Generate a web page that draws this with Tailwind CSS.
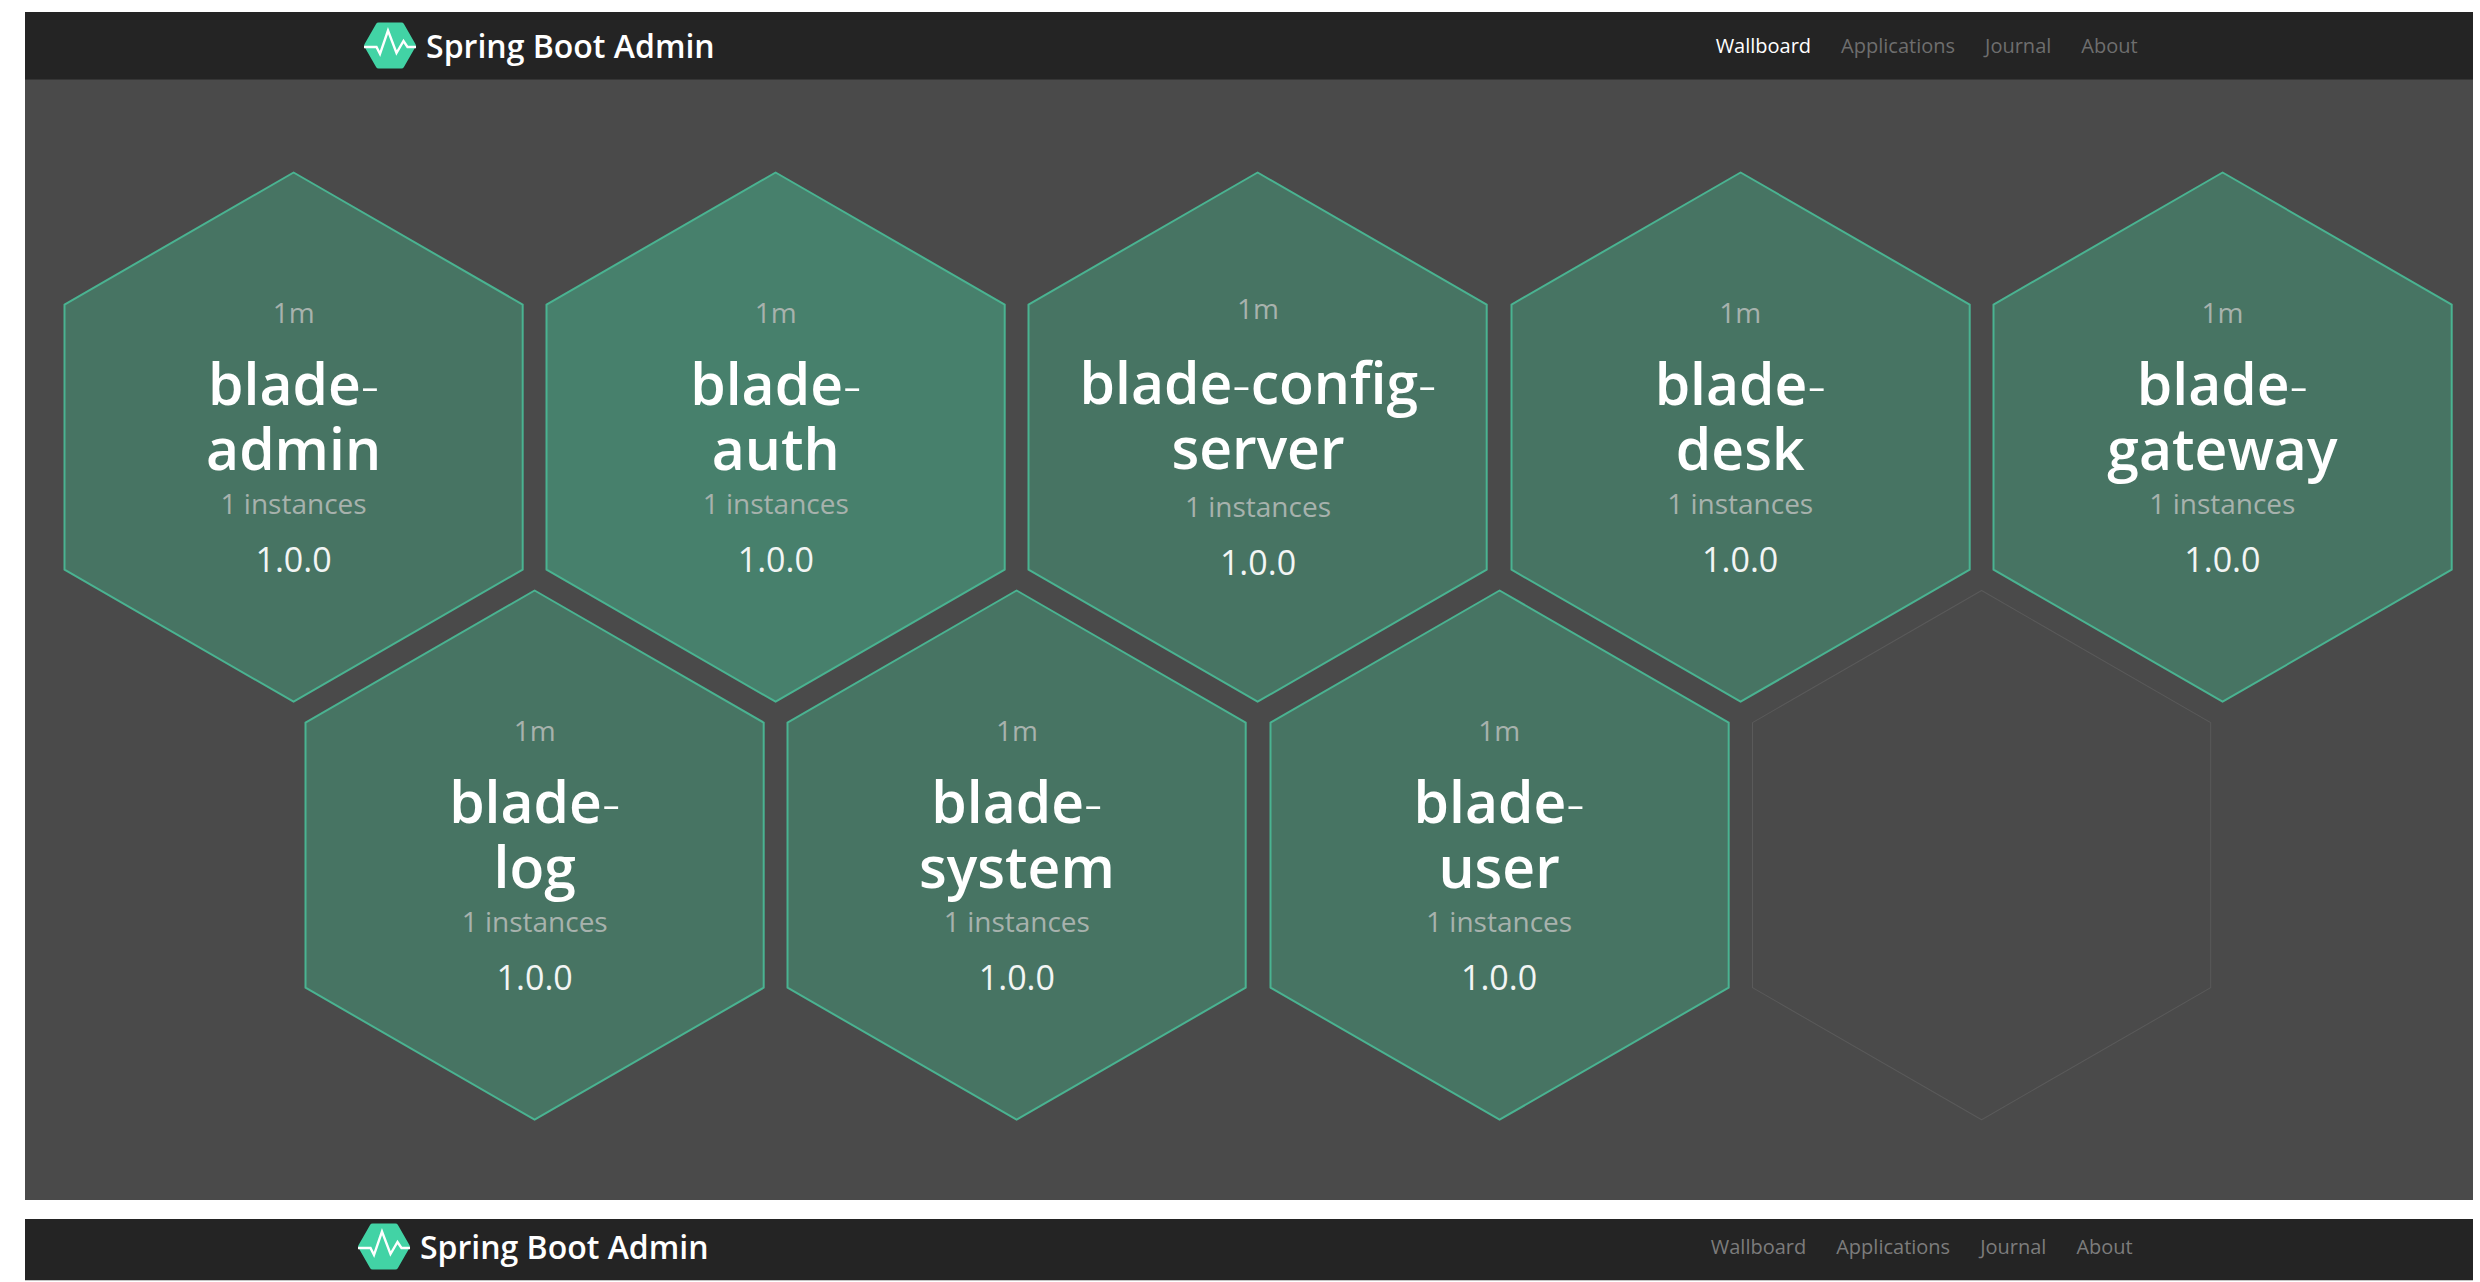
<!DOCTYPE html>
<html lang="en">
<head>
<meta charset="utf-8">
<meta name="viewport" content="width=device-width, initial-scale=1">
<title>Spring Boot Admin</title>
<script src="https://cdn.jsdelivr.net/npm/@tailwindcss/browser@4"></script>
</head>
<body class="bg-white font-['Open_Sans','Noto_Sans',sans-serif]">
<svg class="hidden" aria-hidden="true">
  <symbol id="logo" viewBox="0 0 52 47">
    <path d="M14.5 0.5h23q1.5 0 2.3 1.3L51.4 22q.9 1.5 0 3L39.8 45.2q-.8 1.3-2.3 1.3h-23q-1.5 0-2.3-1.3L.6 25q-.9-1.5 0-3L12.2 1.8Q13 .5 14.5 .5z" fill="#42d3a5"/>
    <path d="M0 25h12.5l3.500 7 8-23.500 8.500 22.500 7-12 4 6H52" fill="none" stroke="#fff" stroke-width="2.400"/>
  </symbol>
  <symbol id="hex" viewBox="0 0 459 530" overflow="visible">
    <path d="M229.500 .5 458.500 132.500v265L229.500 529.500 .5 397.500v-265z" stroke="currentColor" stroke-linejoin="round"/>
  </symbol>
</svg>

<div class="flex flex-col gap-[19px] pt-3 pr-[7px] pl-[25px]">
  <!-- Wallboard page -->
  <section class="bg-[#4a4a4a] pb-[80px]">
    <header class="flex h-[68px] items-center justify-between border-b border-[#363636] bg-[#242424] pr-[13.7%] pl-[13.85%]">
      <a href="#" class="flex items-center gap-[10px] text-[32px] leading-[48px] font-semibold text-white">
        <svg class="h-[47px] w-[52px]" aria-hidden="true"><use href="#logo"/></svg>Spring Boot Admin
      </a>
      <nav class="flex gap-[30px] text-[20px] leading-[28px] text-[#6e6e6e]">
        <a href="#" class="text-white" aria-current="page">Wallboard</a>
        <a href="#">Applications</a>
        <a href="#">Journal</a>
        <a href="#">About</a>
      </nav>
    </header>

    <main class="grid grid-cols-10 gap-x-[23px] pt-[92px] pr-[21px] pl-[39px] text-center">
      <a href="#" class="relative col-span-2 flex aspect-[459/530] flex-col items-center justify-center">
        <svg class="absolute inset-0 h-full w-full overflow-visible fill-[#477463] stroke-2 text-[#4ab391]" aria-hidden="true"><use href="#hex"/></svg>
        <span class="relative text-[28px] leading-[40px] text-[#a7b2ad]">1m</span>
        <span class="relative mt-[19px] mb-[2px] text-[57px] leading-[65px] font-semibold text-white">blade<span class="font-light">-</span><br>admin</span>
        <span class="relative text-[28px] leading-[40px] text-[#a7b2ad]">1 instances</span>
        <span class="relative mt-3 text-[34px] leading-[48px] text-[#f2f5f4]">1.0.0</span>
      </a>
      <a href="#" class="relative col-span-2 flex aspect-[459/530] flex-col items-center justify-center">
        <svg class="absolute inset-0 h-full w-full overflow-visible fill-[#47806c] stroke-2 text-[#4ab391]" aria-hidden="true"><use href="#hex"/></svg>
        <span class="relative text-[28px] leading-[40px] text-[#a7b2ad]">1m</span>
        <span class="relative mt-[19px] mb-[2px] text-[57px] leading-[65px] font-semibold text-white">blade<span class="font-light">-</span><br>auth</span>
        <span class="relative text-[28px] leading-[40px] text-[#a7b2ad]">1 instances</span>
        <span class="relative mt-3 text-[34px] leading-[48px] text-[#f2f5f4]">1.0.0</span>
      </a>
      <a href="#" class="relative col-span-2 flex aspect-[459/530] flex-col items-center justify-center">
        <svg class="absolute inset-0 h-full w-full overflow-visible fill-[#477463] stroke-2 text-[#4ab391]" aria-hidden="true"><use href="#hex"/></svg>
        <span class="relative text-[28px] leading-[40px] text-[#a7b2ad]">1m</span>
        <span class="relative mt-[22px] mb-[6px] text-[57px] leading-[65px] font-semibold text-white">blade<span class="font-light">-</span>config<span class="font-light">-</span><br>server</span>
        <span class="relative text-[28px] leading-[40px] text-[#a7b2ad]">1 instances</span>
        <span class="relative mt-3 text-[34px] leading-[48px] text-[#f2f5f4]">1.0.0</span>
      </a>
      <a href="#" class="relative col-span-2 flex aspect-[459/530] flex-col items-center justify-center">
        <svg class="absolute inset-0 h-full w-full overflow-visible fill-[#477463] stroke-2 text-[#4ab391]" aria-hidden="true"><use href="#hex"/></svg>
        <span class="relative text-[28px] leading-[40px] text-[#a7b2ad]">1m</span>
        <span class="relative mt-[19px] mb-[2px] text-[57px] leading-[65px] font-semibold text-white">blade<span class="font-light">-</span><br>desk</span>
        <span class="relative text-[28px] leading-[40px] text-[#a7b2ad]">1 instances</span>
        <span class="relative mt-3 text-[34px] leading-[48px] text-[#f2f5f4]">1.0.0</span>
      </a>
      <a href="#" class="relative col-span-2 flex aspect-[459/530] flex-col items-center justify-center">
        <svg class="absolute inset-0 h-full w-full overflow-visible fill-[#477463] stroke-2 text-[#4ab391]" aria-hidden="true"><use href="#hex"/></svg>
        <span class="relative text-[28px] leading-[40px] text-[#a7b2ad]">1m</span>
        <span class="relative mt-[19px] mb-[2px] text-[57px] leading-[65px] font-semibold text-white">blade<span class="font-light">-</span><br>gateway</span>
        <span class="relative text-[28px] leading-[40px] text-[#a7b2ad]">1 instances</span>
        <span class="relative mt-3 text-[34px] leading-[48px] text-[#f2f5f4]">1.0.0</span>
      </a>
      <!-- The second row is shifted by half a tile and tucked between the first row's points -->
      <a href="#" class="relative col-span-2 col-start-2 -mt-[24.4%] flex aspect-[459/530] flex-col items-center justify-center">
        <svg class="absolute inset-0 h-full w-full overflow-visible fill-[#477463] stroke-2 text-[#4ab391]" aria-hidden="true"><use href="#hex"/></svg>
        <span class="relative text-[28px] leading-[40px] text-[#a7b2ad]">1m</span>
        <span class="relative mt-[19px] mb-[2px] text-[57px] leading-[65px] font-semibold text-white">blade<span class="font-light">-</span><br>log</span>
        <span class="relative text-[28px] leading-[40px] text-[#a7b2ad]">1 instances</span>
        <span class="relative mt-3 text-[34px] leading-[48px] text-[#f2f5f4]">1.0.0</span>
      </a>
      <a href="#" class="relative col-span-2 -mt-[24.4%] flex aspect-[459/530] flex-col items-center justify-center">
        <svg class="absolute inset-0 h-full w-full overflow-visible fill-[#477463] stroke-2 text-[#4ab391]" aria-hidden="true"><use href="#hex"/></svg>
        <span class="relative text-[28px] leading-[40px] text-[#a7b2ad]">1m</span>
        <span class="relative mt-[19px] mb-[2px] text-[57px] leading-[65px] font-semibold text-white">blade<span class="font-light">-</span><br>system</span>
        <span class="relative text-[28px] leading-[40px] text-[#a7b2ad]">1 instances</span>
        <span class="relative mt-3 text-[34px] leading-[48px] text-[#f2f5f4]">1.0.0</span>
      </a>
      <a href="#" class="relative col-span-2 -mt-[24.4%] flex aspect-[459/530] flex-col items-center justify-center">
        <svg class="absolute inset-0 h-full w-full overflow-visible fill-[#477463] stroke-2 text-[#4ab391]" aria-hidden="true"><use href="#hex"/></svg>
        <span class="relative text-[28px] leading-[40px] text-[#a7b2ad]">1m</span>
        <span class="relative mt-[19px] mb-[2px] text-[57px] leading-[65px] font-semibold text-white">blade<span class="font-light">-</span><br>user</span>
        <span class="relative text-[28px] leading-[40px] text-[#a7b2ad]">1 instances</span>
        <span class="relative mt-3 text-[34px] leading-[48px] text-[#f2f5f4]">1.0.0</span>
      </a>
      <div class="col-span-2 -mt-[24.4%] aspect-[459/530]">
        <svg class="h-full w-full overflow-visible fill-none stroke-1 text-[#5a5a5a]" aria-hidden="true"><use href="#hex"/></svg>
      </div>
    </main>
  </section>

  <!-- Applications page -->
  <section>
    <header class="flex h-[62px] items-center justify-between border-b border-[#c4c4c4] bg-[#242424] pr-[13.9%] pb-[6px] pl-[13.6%]">
      <a href="#" class="flex items-center gap-[10px] text-[32px] leading-[48px] font-semibold text-white">
        <svg class="h-[47px] w-[52px]" aria-hidden="true"><use href="#logo"/></svg>Spring Boot Admin
      </a>
      <nav class="flex gap-[30px] text-[20px] leading-[28px] text-[#7c7c7c]">
        <a href="#">Wallboard</a>
        <a href="#">Applications</a>
        <a href="#">Journal</a>
        <a href="#">About</a>
      </nav>
    </header>
  </section>
</div>
</body>
</html>
